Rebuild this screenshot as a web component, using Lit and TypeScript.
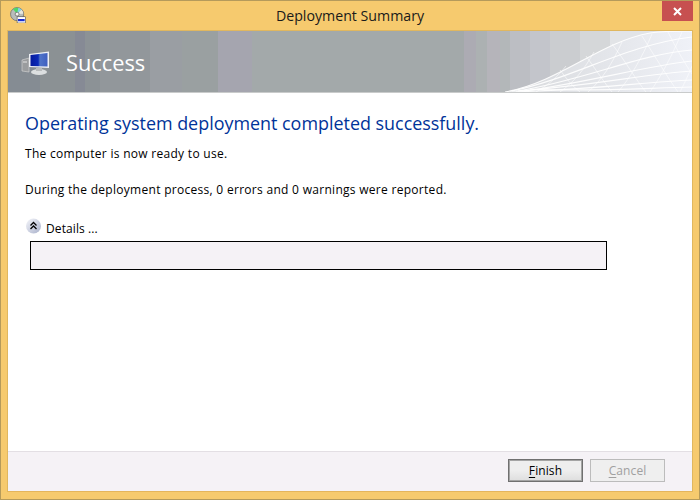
import { LitElement, html, css, svg } from "lit";
import { customElement } from "lit/decorators.js";

const longCurves = [
  "M505 92C560 82 600 42 650 33C665 31 680 31 692 31",
  "M512 91C575 78 625 45 692 37",
  "M518 91C585 80 640 54 692 50",
  "M524 91C590 82 645 66 692 61",
  "M516 91C590 86 645 74 692 71",
  "M510 92C590 90 645 82 692 80",
  "M530 89C590 92 645 88 692 87",
];
const crossCurves = [
  "M536 92C550 84 558 76 566 66",
  "M560 92C574 82 584 70 594 52",
  "M588 92C602 80 612 64 622 42",
  "M618 92C630 78 642 58 652 34",
  "M650 92C660 78 672 56 682 32",
  "M680 92C684 84 688 76 692 66",
  "M580 92C572 86 566 78 560 70",
  "M612 92C604 82 596 70 586 56",
  "M646 92C636 80 626 62 612 44",
  "M678 92C668 78 656 58 642 36",
  "M692 74C684 62 676 48 668 32",
];

@customElement("app-root")
export class AppRoot extends LitElement {
  static styles = css`
    :host {
      display: block;
      width: 700px;
      height: 500px;
      font-family: "Open Sans", "Noto Sans", sans-serif;
      color: #000;
    }
    .window {
      box-sizing: border-box;
      width: 100%;
      height: 100%;
      display: flex;
      flex-direction: column;
      background: #f6ca6e;
      border: 1px solid #b59a5b;
      padding: 0 6px 7px;
    }
    .titlebar {
      display: grid;
      grid-template-columns: 1fr auto 1fr;
      height: 29px;
      flex: none;
    }
    .app-icon {
      display: block;
      margin: 6px 0 0 3px;
    }
    .title {
      font-size: 14.2px;
      line-height: 20px;
      padding-top: 5px;
      color: #1a1a1a;
    }
    .close {
      justify-self: end;
      width: 31px;
      height: 20px;
      background: #c75050;
      display: flex;
      align-items: center;
      justify-content: center;
    }
    .client {
      flex: 1;
      min-height: 0;
      display: flex;
      flex-direction: column;
      background: #fff;
      border: 1px solid #e0b75f;
      border-bottom-color: #e4b55c;
    }
    .banner {
      position: relative;
      flex: none;
      height: 61px;
      display: flex;
      align-items: center;
      gap: 16px;
      padding-left: 13px;
      border-bottom: 1px solid #c9cbcb;
      background: linear-gradient(
        90deg,
        #858c93 0 32px,
        #8b9194 32px 67px,
        #868a95 67px 77px,
        #8c9296 77px 92px,
        #92979b 92px 142px,
        #9a9ea3 142px 174px,
        #9aa0a1 174px 210px,
        #a5a5af 210px 244px,
        #a3a9aa 244px 456px,
        #acabb3 456px 468px,
        #acb1b2 468px 479px,
        #b5b4ba 479px 492px,
        #b3b7b9 492px 502px,
        #bcbec3 502px 522px,
        #c3c5cb 522px 542px,
        #cbcdd0 542px 572px,
        #d5d7d9 572px 602px,
        #e2e4e7 602px
      );
    }
    .mesh {
      position: absolute;
      left: 0;
      top: 0;
    }
    .banner-icon {
      position: relative;
      flex: none;
      margin-top: 3px;
    }
    .banner-title {
      position: relative;
      font-size: 21.8px;
      line-height: 28px;
      margin-top: 3px;
      color: #fff;
    }
    .body {
      flex: 1;
      min-height: 0;
      padding: 18px 0 0 17px;
    }
    h1 {
      margin: 0;
      font-size: 17.92px;
      font-weight: 400;
      line-height: 24px;
      color: #003399;
    }
    p {
      margin: 0;
      font-size: 12px;
      line-height: 16px;
      letter-spacing: 0.29px;
    }
    .ready {
      margin-top: 11px;
    }
    .report {
      margin-top: 20px;
    }
    .details-toggle {
      display: flex;
      align-items: flex-start;
      gap: 4px;
      margin-top: 23px;
      font-size: 12px;
      line-height: 16px;
      letter-spacing: 0.1px;
    }
    .toggle-icon {
      flex: none;
      margin-top: -3px;
    }
    .details-box {
      box-sizing: border-box;
      width: 577px;
      height: 29px;
      margin: 4px 0 0 5px;
      background: #f5f2f6;
      border: 1px solid #000;
    }
    .footer {
      box-sizing: border-box;
      flex: none;
      height: 40px;
      display: flex;
      justify-content: flex-end;
      align-items: flex-start;
      gap: 7px;
      padding: 7px 27px 0 0;
      background: #f5f2f6;
      border-top: 1px solid #e3dfe4;
    }
    button {
      box-sizing: border-box;
      width: 75px;
      height: 23px;
      padding: 0;
      font: inherit;
      font-size: 12px;
      line-height: 16px;
      letter-spacing: 0.1px;
      color: #000;
      border: 1px solid #707070;
      outline: 1px solid #a4a4a4;
      outline-offset: -2px;
      background: linear-gradient(#eeeeee 0 50%, #dedede 100%);
    }
    button[disabled] {
      color: #a0a0a0;
      border-color: #bcbcbc;
      outline: none;
      background: #efefef;
    }
    u {
      text-underline-offset: 2px;
    }
  `;

  render() {
    return html`
      <div class="window">
        <header class="titlebar">
          <svg class="app-icon" width="16" height="16" viewBox="0 0 18 18">
            <circle cx="8" cy="8" r="7.4" fill="#b8bcba" stroke="#6f7172" stroke-width="0.9" />
            <path d="M8 8L3.5 2.4A7 7 0 0 1 9.5 1.2Z" fill="#4fd868" />
            <path d="M8 8L9.5 1.2A7 7 0 0 1 13 3Z" fill="#7fd2e8" />
            <path d="M8 8L13 3A7 7 0 0 1 15 7.5Z" fill="#e8e8e0" />
            <circle cx="8" cy="8" r="2.2" fill="#f4f4f0" stroke="#606060" stroke-width="0.8" />
            <rect x="8" y="11" width="9.5" height="7" fill="#fff" stroke="#333" stroke-width="0.6" />
            <rect x="9" y="13.5" width="7.5" height="2.5" fill="#1a2fd0" />
          </svg>
          <div class="title">Deployment Summary</div>
          <div class="close">
            <svg width="9" height="9" viewBox="0 0 9 9">
              <path d="M1 1L8 8M8 1L1 8" stroke="#fff" stroke-width="2" fill="none" />
            </svg>
          </div>
        </header>
        <main class="client">
          <section class="banner">
            <svg class="mesh" width="684" height="61" viewBox="8 31 684 61">
              <defs>
                <linearGradient id="m" x1="0" y1="0" x2="1" y2="0">
                  <stop offset="0" stop-color="#d6d8db" />
                  <stop offset="1" stop-color="#eff1f7" />
                </linearGradient>
              </defs>
              <path d="M505 92C560 82 600 42 650 33C665 31 680 31 692 31V92Z" fill="url(#m)" />
              <g fill="none" stroke="#fff" stroke-opacity="0.9" stroke-width="1.2">
                ${longCurves.map((d) => svg`<path d=${d} />`)}
              </g>
              <g fill="none" stroke="#fff" stroke-opacity="0.55" stroke-width="1">
                ${crossCurves.map((d) => svg`<path d=${d} />`)}
              </g>
            </svg>
            <svg class="banner-icon" width="29" height="25" viewBox="0 0 29 25">
              <defs>
                <linearGradient id="s" x1="0" y1="0" x2="1" y2="0">
                  <stop offset="0" stop-color="#061a9c" />
                  <stop offset="0.45" stop-color="#0b2ab8" />
                  <stop offset="0.55" stop-color="#4f74c8" />
                  <stop offset="1" stop-color="#3f5fc0" />
                </linearGradient>
              </defs>
              <path d="M1 9L8 7V21L1 20Z" fill="#9a9c9e" stroke="#d8d8d8" stroke-width="0.6" />
              <path d="M2 11H6" stroke="#e4e4e4" />
              <ellipse cx="18" cy="21" rx="8" ry="3" fill="#dcdfe0" />
              <path d="M8 3L28 0.5V17L8 16Z" fill="#eef0f4" />
              <path d="M9.5 4L26.5 2V15.5L9.5 15Z" fill="url(#s)" />
              <path d="M15 17H21V20H15Z" fill="#b8bbbc" />
            </svg>
            <div class="banner-title">Success</div>
          </section>
          <section class="body">
            <h1>Operating system deployment completed successfully.</h1>
            <p class="ready">The computer is now ready to use.</p>
            <p class="report">During the deployment process, 0 errors and 0 warnings were reported.</p>
            <div class="details-toggle">
              <svg class="toggle-icon" width="17" height="17" viewBox="0 0 17 17">
                <defs>
                  <linearGradient id="g" x1="0" y1="0" x2="1" y2="1">
                    <stop offset="0" stop-color="#f6f7fb" />
                    <stop offset="1" stop-color="#a8b0ca" />
                  </linearGradient>
                </defs>
                <circle cx="8.5" cy="8" r="7.5" fill="url(#g)" />
                <path d="M5.5 7.5L8.5 4.5L11.5 7.5M5.5 11L8.5 8L11.5 11" fill="none" stroke="#000" stroke-width="1.3" />
              </svg>
              <span>Details ...</span>
            </div>
            <div class="details-box"></div>
          </section>
          <footer class="footer">
            <button><u>F</u>inish</button>
            <button disabled><u>C</u>ancel</button>
          </footer>
        </main>
      </div>
    `;
  }
}
